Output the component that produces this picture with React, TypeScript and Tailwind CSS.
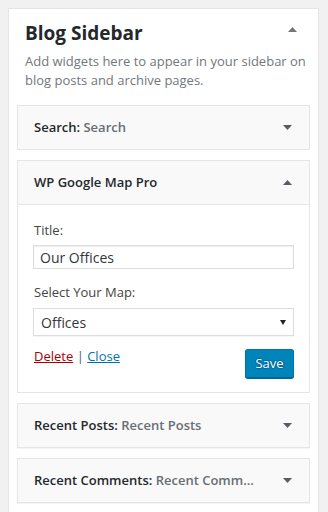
import React from "react";

const FONT = { fontFamily: '"Open Sans", "Noto Sans", sans-serif' };

function TriDown({ color = "#555d66" }: { color?: string }) {
  return (
    <svg width="9" height="5" viewBox="0 0 9 5" className="block">
      <polygon points="0,0 9,0 4.5,5" fill={color} />
    </svg>
  );
}
function TriUp({ color = "#555d66" }: { color?: string }) {
  return (
    <svg width="9" height="5" viewBox="0 0 9 5" className="block">
      <polygon points="0,5 9,5 4.5,0" fill={color} />
    </svg>
  );
}

function CollapsedWidget({ name, inner }: { name: string; inner: string }) {
  return (
    <div className="mt-[10px] flex h-[45px] items-center justify-between border border-[#e5e5e5] bg-[#f9f9f9] pl-[16px] pr-[17px] shadow-[0_1px_1px_rgba(0,0,0,0.04)]">
      <div className="text-[13px] font-semibold leading-[19px] text-[#23282d]">
        {name}: <span className="text-[#686e73]">{inner}</span>
      </div>
      <TriDown />
    </div>
  );
}

export default function App() {
  return (
    <div className="min-h-[512px] bg-[#f1f1f1] pl-[8px] pt-[8px]" style={FONT}>
      <div className="h-[520px] w-[311px] border border-[#e5e5e5] bg-white px-[8px]">
        <div className="flex items-start justify-between pl-[8px] pr-[13px] pt-[12px]">
          <h2 className="text-[19px] font-bold leading-[24px] text-[#23282d]">Blog Sidebar</h2>
          <div className="mt-[6px]">
            <TriUp color="#72777c" />
          </div>
        </div>
        <p className="mt-[7px] pl-[8px] text-[13px] leading-[19px] text-[#72777c]">
          Add widgets here to appear in your sidebar on blog posts and archive pages.
        </p>
        <div className="mt-[15px] flex h-[45px] items-center justify-between border border-[#e5e5e5] bg-[#f9f9f9] pl-[16px] pr-[17px]">
          <div className="text-[13px] font-semibold leading-[19px] text-[#23282d]">
            Search: <span className="text-[#686e73]">Search</span>
          </div>
          <TriDown />
        </div>

        <div className="mt-[10px] border border-[#e5e5e5] bg-white">
          <div className="flex h-[44px] items-center justify-between border-b border-[#e5e5e5] bg-[#f9f9f9] pl-[16px] pr-[17px]">
            <div className="text-[13px] font-semibold leading-[19px] text-[#23282d]">WP Google Map Pro</div>
            <TriUp />
          </div>
          <div className="px-[15px] pb-[14px] pt-[16px]">
            <div className="pl-[1px] text-[13px] leading-[19px] text-[#444]">Title:</div>
            <div className="mt-[5px] flex h-[24px] items-center border border-[#ddd] bg-white px-[6px] text-[14px] text-[#32373c] shadow-[inset_0_1px_2px_rgba(0,0,0,0.07)]">
              Our Offices
            </div>
            <div className="mt-[14px] pl-[1px] text-[13px] leading-[19px] text-[#444]">Select Your Map:</div>
            <div className="mt-[6px] flex h-[28px] items-center justify-between border border-[#ddd] bg-white pl-[7px] pr-[7px] text-[14px] text-[#32373c] shadow-[0_1px_1px_rgba(0,0,0,0.04)]">
              <span>Offices</span>
              <svg width="6" height="5" viewBox="0 0 6 5" className="block">
                <polygon points="0,0 6,0 3,5" fill="#222" />
              </svg>
            </div>
            <div className="mt-[11px] flex items-start justify-between">
              <div className="pl-[1px] text-[13px] leading-[19px] text-[#555d66]">
                <a className="text-[#aa0000] underline">Delete</a> | <a className="text-[#0073aa] underline">Close</a>
              </div>
              <button className="mt-[2px] h-[29px] w-[49px] rounded-[3px] border border-[#0073aa] border-b-[#006799] bg-[#0085ba] text-[13px] text-white shadow-[0_1px_0_#006799] [text-shadow:0_-1px_1px_#006799,1px_0_1px_#006799,0_1px_1px_#006799,-1px_0_1px_#006799]">
                Save
              </button>
            </div>
          </div>
        </div>

        <CollapsedWidget name="Recent Posts" inner="Recent Posts" />
        <CollapsedWidget name="Recent Comments" inner="Recent Comm…" />
      </div>
    </div>
  );
}
